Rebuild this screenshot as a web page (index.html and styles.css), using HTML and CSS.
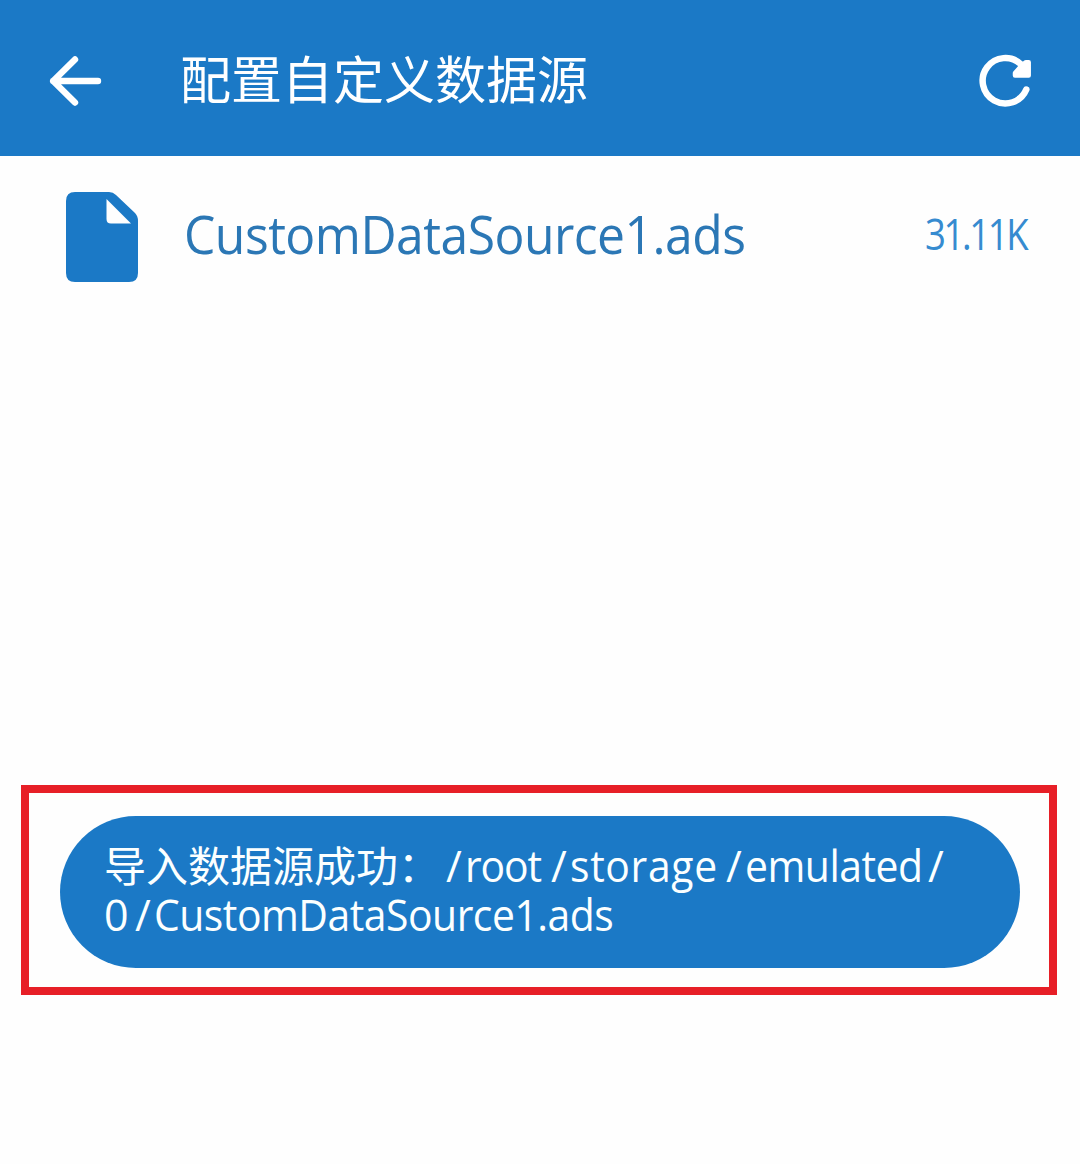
FILE: index.html
```html
<!DOCTYPE html>
<html lang="zh-CN">
<head>
<meta charset="utf-8">
<title>配置自定义数据源</title>
<link rel="stylesheet" href="styles.css">
</head>
<body>
<header class="app-bar">
  <svg class="back-icon" viewBox="0 0 56 56" aria-label="返回"><path d="M28 6.500 6.200 28 28 49.500M6.200 28H51" fill="none" stroke="currentColor" stroke-width="6.4" stroke-linecap="round" stroke-linejoin="round"/></svg>
  <h1 class="title">配置自定义数据源</h1>
  <svg class="refresh-icon" viewBox="0 0 60 60" aria-label="刷新"><path d="M46 13.300A22.700 22.700 0 1 0 51.300 38.500" fill="none" stroke="currentColor" stroke-width="6.5" stroke-linecap="round"/><path d="M47 14 51 11.200H53.700V24.500H40V22Z" fill="currentColor" stroke="currentColor" stroke-width="4.500" stroke-linejoin="round"/></svg>
</header>
<main class="content">
  <div class="file-row">
    <svg class="file-icon" viewBox="0 0 72 90"><path fill="currentColor" fill-rule="evenodd" d="M9 0H43Q47 0 50 3L69 21Q72 24 72 29V81Q72 90 63 90H9Q0 90 0 81V9Q0 0 9 0ZM40.500 7V27Q40.500 31.500 45 31.500H65Z"/></svg>
    <span class="file-name">CustomDataSource1.ads</span>
    <span class="file-size">31.11K</span>
  </div>
  <div class="highlight">
    <div class="toast">
      <div class="toast-line"><span class="message">导入数据源成功：</span><span class="slash">/</span><span class="root">root</span><span class="slash">/</span><span class="storage">storage</span><span class="slash">/</span><span class="emulated">emulated</span><span class="slash">/</span></div>
      <div class="toast-line"><span class="zero">0</span><span class="slash">/</span><span class="path-file">CustomDataSource1.ads</span></div>
    </div>
  </div>
</main>
</body>
</html>
```
FILE: styles.css
```css
* { box-sizing: border-box; }
body {
  margin: 0;
  height: 1164px;
  background: #fefefe;
  font-family: "Open Sans", "Noto Sans CJK SC", sans-serif;
}
.app-bar {
  display: flex;
  align-items: center;
  height: 156px;
  padding: 6px 45px 0 47px;
  background: #1b79c6;
  color: #fff;
}
.back-icon { width: 56px; height: 56px; }
.title {
  flex: 1;
  margin: 0 0 0 77px;
  padding-bottom: 8px;
  font: 400 51px/70px "Noto Sans CJK SC", sans-serif;
}
.refresh-icon { width: 60px; height: 60px; }
.file-row {
  display: flex;
  align-items: center;
  height: 162px;
  padding: 0 51px 0 66px;
}
.file-icon { width: 72px; height: 90px; color: #1b79c6; }
.file-name {
  flex: 1;
  margin-left: 46px;
  padding-bottom: 6px;
  font-size: 53px;
  line-height: 70px;
  letter-spacing: -0.55px;
  transform: scaleX(0.94);
  transform-origin: left;
  color: #2b77b5;
}
.file-size {
  margin-right: 3px;
  margin-left: -6px;
  padding-bottom: 6px;
  font-size: 43px;
  line-height: 60px;
  letter-spacing: -2.8px;
  transform: scaleX(0.85);
  transform-origin: right;
  color: #368bd0;
}
.highlight {
  width: 1036px;
  height: 210px;
  margin: 467px 0 0 21px;
  padding: 23px 29px 19px 31px;
  border: 8px solid #e71f27;
}
.toast {
  height: 152px;
  padding: 25px 44px;
  border-radius: 76px;
  background: #1b79c6;
  color: #fbffff;
}
.toast-line { display: flex; height: 49px; line-height: 49px; font-size: 43px; white-space: nowrap; }
.message { width: 342px; font-size: 42px; }
.slash { width: 19px; }
.root, .storage, .emulated, .path-file { transform: scaleX(0.95); transform-origin: left; }
.root { width: 86px; letter-spacing: -1.2px; }
.storage { width: 156px; letter-spacing: 0.7px; }
.emulated { width: 183px; letter-spacing: -0.5px; }
.zero { width: 31px; }
.path-file { letter-spacing: -0.5px; }
```
